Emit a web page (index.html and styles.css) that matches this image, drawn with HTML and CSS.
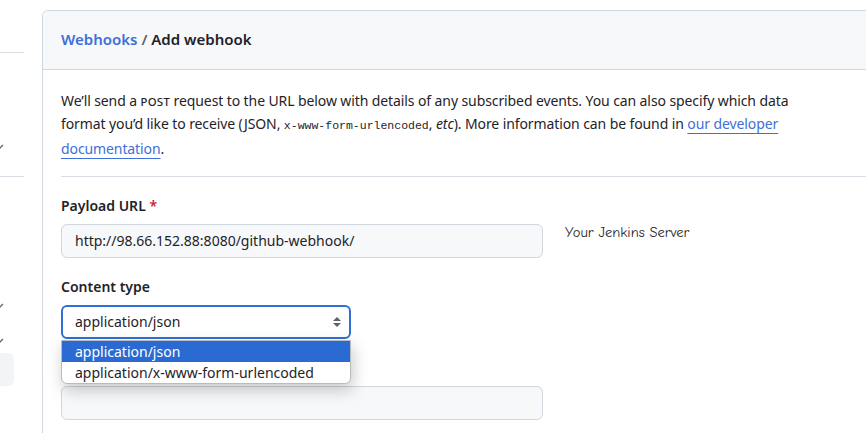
FILE: index.html
```html
<!DOCTYPE html>
<html>
<head>
<meta charset="utf-8">
<link rel="stylesheet" href="styles.css">
</head>
<body>
<div class="page">
  <aside class="sidebar">
    <div class="side-item first"></div>
    <div class="side-item chev-row"><svg class="chev" width="10" height="10" viewBox="0 0 10 10"><path d="M1 3 L5 7 L9 3" fill="none" stroke="#656d76" stroke-width="1.4"/></svg></div>
    <div class="side-item sep"></div>
    <div class="side-item chev-row r2"><svg class="chev" width="10" height="10" viewBox="0 0 10 10"><path d="M1 3 L5 7 L9 3" fill="none" stroke="#656d76" stroke-width="1.4"/></svg></div>
    <div class="side-item chev-row r3"><svg class="chev" width="10" height="10" viewBox="0 0 10 10"><path d="M1 3 L5 7 L9 3" fill="none" stroke="#656d76" stroke-width="1.4"/></svg></div>
    <div class="side-active"></div>
  </aside>
  <main class="card">
    <div class="card-header">
      <a class="crumb" href="#">Webhooks</a> <span class="slash">/</span> Add webhook
    </div>
    <div class="card-body">
      <p class="intro">We’ll send a <span class="sc">post</span> request to the URL below with details of any subscribed events. You can also specify which data format you’d like to receive (JSON, <code>x-www-form-urlencoded</code>, <em>etc</em>). More information can be found in <a href="#" class="doc">our developer documentation</a>.</p>
      <div class="divider"></div>
      <div class="form">
        <label class="label">Payload URL <span class="req">*</span></label>
        <div class="row">
          <div class="input url">http://98.66.152.88:8080/github-webhook/</div>
          <span class="note">Your Jenkins Server</span>
        </div>
        <label class="label">Content type</label>
        <div class="select-wrap">
          <div class="select">application/json
            <svg class="arrows" width="10" height="14" viewBox="0 0 10 14"><path d="M5 2 L9 6 H1 Z M5 12 L9 8 H1 Z" fill="#59636e"/></svg>
          </div>
          <ul class="dropdown">
            <li class="opt active">application/json</li>
            <li class="opt">application/x-www-form-urlencoded</li>
          </ul>
        </div>
        <label class="label">Secret</label>
        <div class="input url"></div>
      </div>
    </div>
  </main>
</div>
</body>
</html>
```
FILE: styles.css
```css
* { box-sizing: border-box; }
html, body { margin: 0; padding: 0; background: #fff; }
body {
  width: 866px; height: 433px; overflow: hidden;
  font-family: "Noto Sans", "Liberation Sans", sans-serif;
  font-size: 14px; color: #1f2328;
}
.page { display: flex; align-items: flex-start; }
.sidebar { width: 24px; flex: none; margin-right: 18px; position: relative; height: 433px; }
.side-item.first { height: 53px; border-bottom: 1px solid #d8dee4; }
.chev-row { height: 20px; position: relative; overflow: hidden; }
.chev-row:nth-child(2) { margin-top: 85px; }
.chev { position: absolute; left: -6px; top: 4px; }
.side-item.sep { height: 1px; background: #d8dee4; margin-top: 18px; }
.chev-row.r2 { margin-top: 120px; }
.chev-row.r3 { margin-top: 15px; }
.side-active { width: 14px; height: 33px; margin-top: 1px; background: #f3f4f6; border-radius: 0 6px 6px 0; }

.card {
  margin-top: 10px; width: 900px; flex: none;
  border: 1px solid #d0d7de; border-radius: 6px 0 0 0;
  height: 440px;
}
.card-header {
  background: #f6f8fa; border-bottom: 1px solid #d0d7de;
  height: 59px; padding: 16px 18px 0; font-size: 15px; font-weight: 600; line-height: 24px;
  border-radius: 6px 0 0 0;
}
.crumb { color: #3f6fd8; text-decoration: none; }
.slash { color: #59636e; }
.card-body { padding: 0 0 0 18px; }
.intro { margin: 0; padding: 19px 0 16px; line-height: 23px; width: 770px; letter-spacing: -0.1px; }
.divider { height: 1px; background: #d8dee4; }
.sc { font-variant: small-caps; letter-spacing: 0.3px; }
code { font-family: "Liberation Mono", "DejaVu Sans Mono", monospace; font-size: 11.5px; letter-spacing: 0; }
em { font-style: italic; }
.doc { color: #3f6fd8; text-decoration: underline; text-underline-offset: 4px; text-decoration-thickness: 1px; }
.form { display: flex; flex-direction: column; align-items: flex-start; }
.label { display: block; font-weight: 600; line-height: 20px; margin-top: 19px; margin-bottom: 8px; }
.req { color: #cf222e; }
.row { display: flex; align-items: flex-start; }
.input {
  width: 482px; height: 34px; background: #f6f8fa;
  border: 1px solid #d0d7de; border-radius: 6px;
  padding: 0 13px; line-height: 32px; font-size: 14px;
}
.note { font-family: "Comic Sans MS", "Comic Neue", "DejaVu Sans", cursive; font-size: 14.5px; margin: -1px 0 0 22px; line-height: 20px; }
.select-wrap { position: relative; }
.select {
  width: 290px; height: 34px; border: 2px solid #2f6fd6; border-radius: 6px;
  padding: 0 12px; line-height: 30px; background: #fff; position: relative;
}
.arrows { position: absolute; right: 7px; top: 8px; }
.dropdown {
  position: absolute; left: 0; top: 35px; z-index: 5;
  width: 290px; margin: 0; padding: 0; list-style: none;
  background: #fff; border: 1px solid #b8bcc2; border-radius: 0 0 6px 6px;
  box-shadow: 2px 6px 16px rgba(0,0,0,0.22);
  overflow: hidden;
}
.opt { height: 21px; line-height: 21px; padding-left: 13px; font-size: 14px; }
.opt.active { background: #2b6ad2; color: #fff; }
```
